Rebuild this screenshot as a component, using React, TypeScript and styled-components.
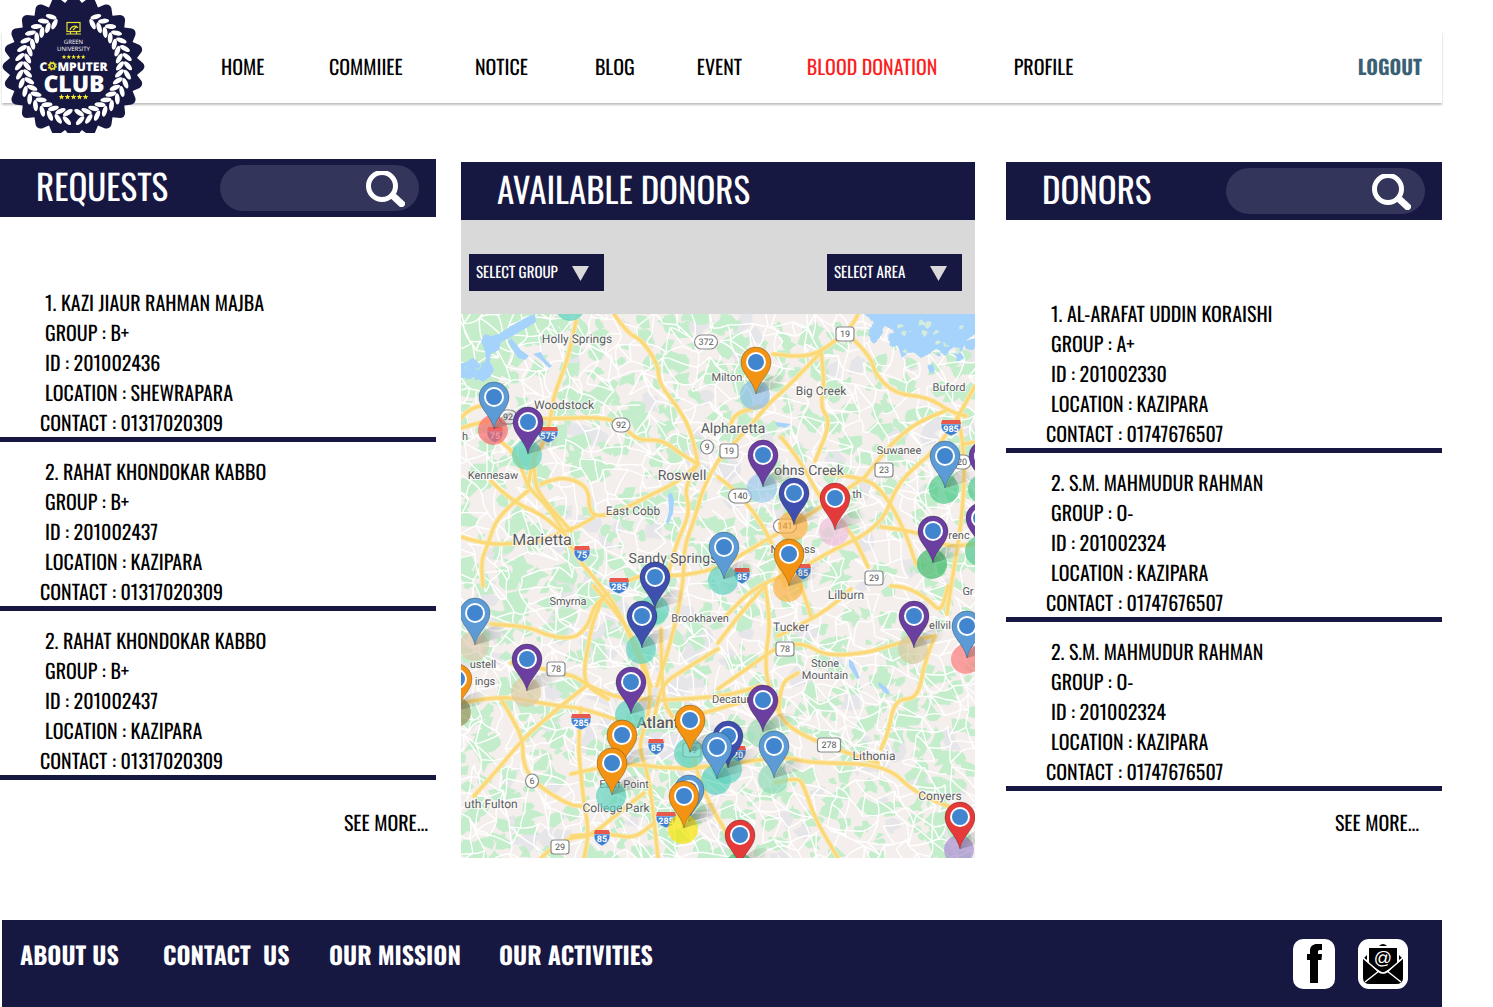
import React from "react";
import styled, { createGlobalStyle } from "styled-components";

const navy = "#171842";
const condensed = `Oswald, "Liberation Sans Narrow", "Roboto Condensed", "Open Sans Condensed", "DejaVu Sans Condensed", "Liberation Sans", sans-serif`;

const GlobalStyle = createGlobalStyle`
  *, *::before, *::after { box-sizing: border-box; }
  body {
    margin: 0;
    background: #fff;
    color: #000;
    font-family: ${condensed};
    text-rendering: geometricPrecision;
  }
  a { color: inherit; text-decoration: none; }
`;

const Page = styled.div`
  display: flex;
  flex-direction: column;
  min-height: 100vh;
  padding-right: 51px;
`;

/* ---------- top bar ---------- */

const Header = styled.header`
  position: relative;
  margin: 31px 0 0 2px;
  background: #fff;
  box-shadow: 0 2px 2px rgba(0, 0, 0, 0.25);
`;

const LogoLink = styled.a`
  position: absolute;
  left: 0;
  top: -31px;
  line-height: 0;
`;

const Nav = styled.nav`
  display: grid;
  grid-template-columns: 108fr 146fr 120fr 102fr 110fr 207fr 344fr auto;
  align-items: center;
  height: 72px;
  padding: 0 20px 2px 219px;
`;

const NavLink = styled.a<{ $tone?: string; $bold?: boolean }>`
  font-size: 20px;
  line-height: 30px;
  white-space: nowrap;
  color: ${(p) => p.$tone ?? "#000"};
  font-weight: ${(p) => (p.$bold ? 700 : 400)};
`;

/* ---------- main columns ---------- */

const Main = styled.main`
  display: grid;
  grid-template-columns: 436fr 514fr 442fr;
  gap: 25px;
  margin-top: 56px;
`;

const Column = styled.section<{ $top?: number; $inset?: number }>`
  display: flex;
  flex-direction: column;
  min-width: 0;
  padding-top: ${(p) => p.$top ?? 0}px;
  padding-left: ${(p) => p.$inset ?? 0}px;
`;

const PanelHead = styled.div`
  display: flex;
  align-items: center;
  justify-content: space-between;
  height: 58px;
  padding: 0 17px 0 36px;
  background: ${navy};
  color: #fff;
`;

const PanelTitle = styled.h2`
  margin: 0;
  padding-bottom: 4px;
  font-size: 35px;
  font-weight: 400;
  line-height: 54px;
  white-space: nowrap;
`;

const SearchBox = styled.form`
  display: flex;
  align-items: center;
  width: 199px;
  height: 46px;
  padding: 2px 14px 0 18px;
  border-radius: 23px;
  background: #34355b;
`;

const SearchInput = styled.input`
  flex: 1;
  min-width: 0;
  border: 0;
  outline: 0;
  background: transparent;
  color: #fff;
  font: 16px/24px ${condensed};
`;

const SearchButton = styled.button`
  padding: 0;
  border: 0;
  background: transparent;
  line-height: 0;
  cursor: pointer;
`;

const PersonList = styled.ul<{ $top: number }>`
  display: flex;
  flex-direction: column;
  gap: 14px;
  margin: 0;
  padding: ${(p) => p.$top}px 0 0;
  list-style: none;
`;

const Person = styled.li`
  padding-left: 40px;
  border-bottom: 5px solid ${navy};
  font-size: 20px;
  line-height: 30px;
`;

const Line = styled.div<{ $indent?: boolean }>`
  padding-left: ${(p) => (p.$indent ? 5 : 0)}px;
  white-space: nowrap;
`;

const SeeMore = styled.a<{ $right: number }>`
  align-self: flex-end;
  margin-top: auto;
  padding: 0 ${(p) => p.$right}px 21px 0;
  font-size: 20px;
  line-height: 30px;
`;

const Filters = styled.div`
  display: flex;
  justify-content: space-between;
  padding: 34px 13px 23px 8px;
  background: #d9d9d9;
`;

const SelectWrap = styled.div`
  position: relative;
  width: 135px;
  height: 37px;
`;

const Select = styled.select`
  width: 100%;
  height: 100%;
  padding: 0 40px 2px 7px;
  border: 0;
  border-radius: 0;
  appearance: none;
  background: ${navy};
  color: #fff;
  font: 15px/20px ${condensed};
  text-rendering: geometricPrecision;
`;

const Caret = styled.svg`
  position: absolute;
  right: 15px;
  top: 12px;
  pointer-events: none;
`;

const MapCanvas = styled.svg`
  display: block;
  width: 100%;
  height: auto;
  font-family: Roboto, "Liberation Sans", sans-serif;
`;

/* ---------- footer ---------- */

const Footer = styled.footer`
  display: flex;
  align-items: flex-start;
  justify-content: space-between;
  flex: 1;
  margin: 62px 0 0 2px;
  padding: 16px 34px 18px 18px;
  background: ${navy};
  color: #fff;
`;

const FooterLinks = styled.nav`
  display: grid;
  grid-template-columns: 143px 166px 170px auto;
`;

const FooterLink = styled.a`
  font-size: 24px;
  font-weight: 700;
  line-height: 36px;
  white-space: pre;
`;

const Socials = styled.div`
  display: flex;
  gap: 23px;
  padding-top: 3px;
`;

const SocialLink = styled.a`
  line-height: 0;
`;

/* ---------- logo ---------- */

const polar = (r: number, deg: number): [number, number] => {
  const a = (deg * Math.PI) / 180;
  return [73.5 + r * Math.cos(a), 66.5 + r * Math.sin(a)];
};

const fix = (p: [number, number]) => `${p[0].toFixed(1)} ${p[1].toFixed(1)}`;

function sealPath() {
  const n = 24;
  const step = 360 / n;
  let d = `M${fix(polar(64, -step / 2))}`;
  for (let i = 0; i < n; i++) {
    const a = i * step;
    d += `L${fix(polar(69.5, a - 3))}Q${fix(polar(72.5, a))} ${fix(polar(69.5, a + 3))}L${fix(polar(64, a + step / 2))}`;
  }
  return d + "Z";
}

const starPoints = (cx: number, cy: number, r: number) =>
  Array.from({ length: 10 }, (_, i) => {
    const a = -Math.PI / 2 + (i * Math.PI) / 5;
    const q = i % 2 ? r * 0.45 : r;
    return `${(cx + q * Math.cos(a)).toFixed(2)},${(cy + q * Math.sin(a)).toFixed(2)}`;
  }).join(" ");

function Logo() {
  const leaves: React.ReactNode[] = [];
  for (let side = 0; side < 2; side++) {
    const s = side ? 1 : -1;
    for (let i = 0; i < 17; i++) {
      const deg = 90 - s * (7 + i * 9.3);
      const along = deg - s * 90;
      [[46.5, s * 40], [54.5, -s * 40]].forEach(([r, tilt], k) => {
        const [x, y] = polar(r, deg);
        leaves.push(
          <ellipse key={`${side}-${i}-${k}`} cx={x} cy={y} rx={5.6} ry={2.4} transform={`rotate(${along + tilt} ${x} ${y})`} />,
        );
      });
    }
  }
  return (
    <svg width="144" height="133" viewBox="2 0 144 133" role="img" aria-label="Green University Computer Club">
      <path d={sealPath()} fill={navy} />
      <g fill="#fff">{leaves}</g>
      <g fill="none" stroke="#e6e034" strokeWidth="1.2">
        <rect x="67" y="22.500" width="13" height="9" />
        <path d="M70 30c1-4 6-5 8-2M73 30l4-4M66 34h15M70.500 32v2M76.500 32v2" />
      </g>
      <g fill="#fff" textAnchor="middle" fontFamily={`"Open Sans", "Noto Sans", sans-serif`}>
        <text x="73.500" y="44" fontSize="6">GREEN</text>
        <text x="73.500" y="51" fontSize="6">UNIVERSITY</text>
        <g fontWeight="800">
          <text x="43.500" y="71" fontSize="12">C</text>
          <text x="82.500" y="71" fontSize="12">MPUTER</text>
          <text x="74" y="92" fontSize="23">CLUB</text>
        </g>
      </g>
      <circle cx="52.300" cy="66" r="2.800" fill="none" stroke="#e6e034" strokeWidth="1.800" />
      <circle cx="52.300" cy="66" r="4" fill="none" stroke="#e6e034" strokeWidth="1.200" strokeDasharray="1.600 1.540" />
      <circle cx="52.300" cy="66" r="0.800" fill="#e6e034" />
      <g fill="#f3e92b">
        {[0, 1, 2, 3, 4].map((i) => (
          <React.Fragment key={i}>
            <polygon points={starPoints(64 + i * 4.8, 57, 2.4)} />
            <polygon points={starPoints(61.500 + i * 6, 97, 3)} />
          </React.Fragment>
        ))}
      </g>
    </svg>
  );
}

/* ---------- map ---------- */

function makeRandom(seed: number) {
  let s = seed;
  return () => {
    s = (s * 1664525 + 1013904223) % 4294967296;
    return s / 4294967296;
  };
}

type Pt = [number, number];

function smooth(pts: Pt[]) {
  let d = `M${pts[0][0]} ${pts[0][1]}`;
  for (let i = 1; i < pts.length - 1; i++) {
    const mx = (pts[i][0] + pts[i + 1][0]) / 2;
    const my = (pts[i][1] + pts[i + 1][1]) / 2;
    d += `Q${pts[i][0]} ${pts[i][1]} ${mx.toFixed(1)} ${my.toFixed(1)}`;
  }
  const last = pts[pts.length - 1];
  return d + `L${last[0]} ${last[1]}`;
}

function buildTerrain() {
  const rnd = makeRandom(41);
  const greens: string[] = [];
  const greys: string[] = [];
  const blob = (x: number, y: number, r: number) => {
    const n = 8;
    const pts = Array.from({ length: n }, (_, i) => {
      const a = (i / n) * Math.PI * 2;
      const q = r * (0.35 + rnd());
      return `${(x + q * 1.1 * Math.cos(a)).toFixed(1)} ${(y + q * Math.sin(a)).toFixed(1)}`;
    });
    return `M${pts.join("L")}Z`;
  };
  for (let i = 0; i < 1050; i++) greens.push(blob(rnd() * 514, rnd() * 544, 3 + rnd() * 8));
  for (let i = 0; i < 160; i++) greys.push(blob(rnd() * 514, rnd() * 544, 4 + rnd() * 9));
  for (let i = 0; i < 40; i++) greys.push(blob(90 + rnd() * 150, 270 + rnd() * 180, 6 + rnd() * 9));

  const cell = 14;
  const cols = 39;
  const rows = 41;
  const grid: Pt[][] = [];
  for (let r = 0; r < rows; r++) {
    grid.push([]);
    for (let c = 0; c < cols; c++) {
      grid[r].push([(c - 0.5) * cell + (rnd() - 0.5) * 15, (r - 0.5) * cell + (rnd() - 0.5) * 15]);
    }
  }
  const edge = (a: Pt, b: Pt) => {
    const mx = (a[0] + b[0]) / 2 + (rnd() - 0.5) * 7;
    const my = (a[1] + b[1]) / 2 + (rnd() - 0.5) * 7;
    return `M${a[0].toFixed(1)} ${a[1].toFixed(1)}Q${mx.toFixed(1)} ${my.toFixed(1)} ${b[0].toFixed(1)} ${b[1].toFixed(1)}`;
  };
  let streets = "";
  for (let r = 0; r < rows - 1; r++) {
    for (let c = 0; c < cols - 1; c++) {
      if (rnd() < 0.74) streets += edge(grid[r][c], grid[r][c + 1]);
      if (rnd() < 0.74) streets += edge(grid[r][c], grid[r + 1][c]);
      if (rnd() < 0.3) streets += edge(grid[r][c], grid[r + 1][c + 1]);
    }
  }
  const inlets: string[] = [];
  for (let i = 0; i < 46; i++) inlets.push(blob(408 + rnd() * 106, rnd() * rnd() * 62, 2 + rnd() * 6));
  for (let i = 0; i < 16; i++) inlets.push(blob(rnd() * 30, 50 + rnd() * 14, 2 + rnd() * 4));
  const islets: string[] = [];
  for (let i = 0; i < 14; i++) islets.push(blob(415 + rnd() * 90, 4 + rnd() * 36, 1 + rnd() * 3));
  return { greens: greens.join(""), greys: greys.join(""), streets, inlets: inlets.join(""), islets: islets.join("") };
}

const terrain = buildTerrain();

const highways: Pt[][] = [
  [[115, 7], [108, 43], [93, 80], [90, 103], [83, 130], [72, 143], [67, 173]],
  [[0, 114], [20, 108], [45, 104], [83, 105], [143, 103], [160, 110], [177, 127], [200, 125], [220, 140], [237, 150]],
  [[0, 104], [8, 94], [30, 90]],
  [[153, 0], [167, 20], [180, 25], [197, 50], [198, 70], [217, 93], [230, 117], [237, 150]],
  [[237, 150], [222, 172], [230, 197], [215, 230], [207, 262], [190, 300]],
  [[257, 147], [243, 170], [233, 207], [223, 233], [223, 262], [215, 310], [196, 372]],
  [[33, 123], [50, 133], [63, 160], [67, 173], [87, 193], [103, 217], [113, 240], [140, 272], [160, 300], [180, 350], [190, 372]],
  [[73, 140], [73, 167], [80, 183], [110, 217]],
  [[80, 170], [97, 163], [117, 167], [128, 177], [128, 197], [137, 203], [160, 197], [187, 182], [217, 168], [237, 150]],
  [[67, 177], [37, 200], [27, 230], [20, 247], [22, 272]],
  [[0, 223], [23, 230], [50, 230], [80, 227], [103, 217], [117, 213], [133, 203]],
  [[30, 167], [50, 187], [80, 200], [100, 217]],
  [[167, 267], [187, 258], [213, 263], [257, 255], [290, 235], [350, 200], [404, 163]],
  [[397, 0], [392, 13], [360, 38], [340, 43], [312, 40]],
  [[360, 38], [330, 70], [307, 90], [297, 103], [257, 147]],
  [[360, 38], [364, 67], [359, 93], [370, 108], [354, 147]],
  [[270, 110], [272, 100], [300, 92]],
  [[394, 27], [410, 43], [414, 60], [434, 80], [467, 83], [490, 98], [505, 102]],
  [[514, 72], [504, 90], [497, 103], [474, 137], [437, 167], [420, 213], [364, 240], [337, 257], [294, 272], [262, 305]],
  [[484, 97], [457, 107], [430, 130], [414, 150], [404, 163]],
  [[257, 163], [277, 177], [310, 223], [324, 272]],
  [[320, 123], [340, 147], [360, 187], [390, 217], [407, 253]],
  [[367, 160], [404, 163], [424, 180], [444, 217], [455, 250]],
  [[420, 213], [457, 217], [484, 233], [514, 230]],
  [[497, 103], [504, 133], [502, 200], [490, 272], [486, 300]],
  [[504, 130], [514, 128]],
  [[30, 310], [67, 312], [87, 322], [113, 325], [127, 312], [133, 292], [147, 279]],
  [[143, 282], [133, 302], [127, 332], [123, 355], [125, 372], [147, 385]],
  [[0, 389], [37, 382], [70, 387], [97, 392], [120, 394], [153, 405], [177, 412]],
  [[125, 372], [97, 394], [62, 425], [37, 455], [13, 482]],
  [[40, 385], [50, 402], [62, 425], [62, 452], [77, 472], [110, 492], [123, 492]],
  [[120, 394], [117, 429], [120, 462], [123, 489], [128, 519], [123, 544]],
  [[50, 349], [110, 359], [127, 372], [160, 385], [190, 385]],
  [[133, 272], [150, 292], [163, 309], [180, 339], [190, 372], [187, 405], [177, 432], [187, 459], [193, 505], [197, 544]],
  [[200, 315], [200, 385], [213, 405], [230, 432], [240, 472], [257, 505], [262, 512], [271, 532]],
  [[257, 335], [217, 359], [200, 372], [193, 405]],
  [[110, 522], [147, 519], [173, 525], [193, 509]],
  [[80, 544], [100, 525], [130, 522], [150, 505], [183, 479]],
  [[110, 460], [160, 448], [205, 455], [257, 452]],
  [[304, 272], [310, 305], [304, 345], [307, 372], [320, 405], [337, 419], [374, 435], [417, 449]],
  [[257, 329], [277, 302], [304, 272]],
  [[257, 375], [290, 352], [317, 332], [344, 329], [364, 342], [407, 339], [437, 329], [474, 322]],
  [[390, 275], [370, 295], [317, 322]],
  [[340, 272], [350, 302]],
  [[430, 272], [444, 272], [467, 285], [480, 299], [487, 272]],
  [[474, 322], [464, 345], [457, 385], [434, 385], [427, 419], [420, 435]],
  [[220, 455], [257, 452], [324, 442], [347, 449], [424, 450], [454, 479], [487, 492], [514, 505]],
  [[314, 469], [337, 462], [344, 475], [354, 505], [377, 544]],
  [[318, 400], [318, 370], [337, 359]],
  [[200, 386], [257, 384], [300, 372]],
  [[200, 410], [240, 400], [290, 385]],
];

const lakes = [
  "M0 54L18 56L25 46L24 37L20 27L24 20L30 22L38 20L50 12L66 3L74 0L75 8L62 16L48 24L40 28L38 36L30 40L28 52L30 62L22 68L14 63L0 64Z",
  "M50 24L60 36L68 42L64 46L57 44L47 28Z",
  "M72 40l8 -2l3 6l8 8l-3 2l-9 -9Z",
  "M410 0L514 0L514 20L506 26L500 38L492 32L484 42L476 34L468 40L460 44L450 36L441 44L436 30L432 16L424 12L418 16L412 8Z",
  "M207 180l4 -1l2 8l-1 12l-5 12l-2 -3l3 -11Z",
  "M388 345l4 3l7 16l-3 1l-8 -13Z",
  "M418 368l8 6l3 6l-4 0l-8 -9Z",
  "M314 108l16 2l-6 4l-8 -2Z",
];

/* Place names half hidden by a pin or the map edge carry only their visible part. */
const labels: [string, number, number, number, number?][] = [
  ["Holly Springs", 577, 343, 12], ["Milton", 727, 381, 11], ["Big Creek", 821, 395, 12], ["Woodstock", 564, 409, 12],
  ["Alpharetta", 733, 433, 14], ["Kennesaw", 493, 479, 11], ["Roswell", 682, 480, 14], ["ohns Creek", 809, 475, 14],
  ["Suwanee", 899, 454, 11], ["Buford", 949, 391, 11], ["East Cobb", 633, 515, 12], ["Marietta", 542, 545, 16],
  ["Sandy Springs", 673, 563, 14], ["Norcross", 793, 553, 11], ["renc", 959, 539, 11], ["Smyrna", 568, 605, 11],
  ["Brookhaven", 700, 622, 11], ["Lilburn", 846, 599, 12], ["Tucker", 791, 631, 12], ["Stone", 825, 667, 11],
  ["Mountain", 825, 679, 11], ["ustell", 483, 668, 11], ["ings", 485, 685, 11], ["Decatur", 731, 703, 11],
  ["Atlanta", 662, 728, 16, 500], ["Lithonia", 874, 760, 12], ["Conyers", 940, 800, 12], ["East Point", 624, 788, 11],
  ["College Park", 616, 812, 12], ["uth Fulton", 491, 808, 12], ["ellvil", 940, 629, 11], ["th", 857, 498, 11],
  ["Gr", 968, 595, 11], ["h", 465, 440, 11],
];

const routeSigns: [string, number, number, boolean][] = [
  ["372", 706, 342, true], ["92", 621, 425, true], ["92", 508, 417, true], ["9", 707, 447, true], ["140", 740, 496, true],
  ["20", 962, 462, true], ["6", 532, 781, true], ["19", 845, 334, false], ["19", 729, 451, false], ["23", 884, 470, false],
  ["29", 874, 578, false], ["78", 556, 669, false], ["78", 785, 649, false], ["278", 829, 745, false], ["29", 560, 847, false],
  ["19", 692, 750, false], ["141", 785, 526, true],
];

const interstates: [string, number, number][] = [
  ["575", 548, 435], ["75", 495, 435], ["75", 582, 554], ["985", 951, 428], ["85", 742, 576], ["85", 803, 572],
  ["285", 619, 586], ["285", 581, 722], ["85", 656, 747], ["20", 738, 754], ["285", 666, 820], ["85", 602, 838],
];

const blue = "#5c9bd5";
const purple = "#6b3fa0";
const indigo = "#3f4fae";
const orange = "#f39314";
const red = "#e53a3a";
const teal = "#5fd2bd";

const pins: [number, number, string, string?][] = [
  [494, 397, blue, "#fb6a6a"], [528, 422, purple, teal], [756, 362, orange, "#8fbfe8"], [763, 455, purple, "#a3cbf0"],
  [794, 493, indigo, "#fbb040"], [835, 498, red, "#f0c0dc"], [724, 547, blue, teal], [789, 554, orange, "#fbb040"],
  [984, 456, purple, "#4fc98a"], [945, 456, blue, "#4fc98a"], [981, 518, purple, "#4fc98a"], [933, 531, purple, "#3fb96a"],
  [655, 577, indigo, teal], [642, 616, indigo, teal], [914, 616, purple, "#d6caa0"], [967, 626, blue, "#fb7a7a"],
  [475, 613, blue, "#dccbb0"], [527, 659, purple, "#dccba4"], [457, 679, orange, "#97935a"], [631, 682, purple, teal],
  [690, 720, orange, teal], [763, 700, purple, "#a0dcb8"], [728, 736, indigo, teal], [717, 747, blue, teal],
  [774, 746, blue, "#8fdcb8"], [622, 735, orange], [612, 763, orange, teal], [689, 790, blue], [684, 796, orange, "#f7e600"],
  [740, 835, red, "#3fb96a"], [960, 817, red, "#a78fd0"],
];

function DonorMap() {
  return (
    <MapCanvas viewBox="0 0 514 544" role="img" aria-label="Map of available donors">
      <defs>
        <linearGradient id="pinShadow" x1="0" y1="0" x2="1" y2="0">
          <stop offset="0" stopColor="#333" stopOpacity="0.5" />
          <stop offset="1" stopColor="#333" stopOpacity="0" />
        </linearGradient>
      </defs>
      <rect width="514" height="544" fill="#f4efec" />
      <path d={terrain.greys} fill="#e6e5e9" />
      <path d={terrain.greens} fill="#c4edcb" />
      <path d="M0 0H92L80 14L52 34L44 56L32 76L12 84L0 82Z" fill="#c5edc9" />
      <path d={terrain.streets} fill="none" stroke="#fff" strokeWidth="1.400" />
      <g fill="#a6d3fb">
        {lakes.map((d) => <path key={d} d={d} />)}
        <path d={terrain.inlets} />
      </g>
      <path d={terrain.islets} fill="#d3ecdc" />
      <g fill="none" strokeLinecap="round" strokeLinejoin="round">
        {highways.map((pts, i) => <path key={i} d={smooth(pts)} stroke="#fbe7ac" strokeWidth="5" />)}
        {highways.map((pts, i) => <path key={i} d={smooth(pts)} stroke="#fbd878" strokeWidth="3" />)}
      </g>
      <g transform="translate(-461 -314)">
        <circle cx="570" cy="306" r="15" fill={teal} fillOpacity="0.75" />
        <g textAnchor="middle" fill="#5b5b60" stroke="#fff" strokeWidth="2" strokeOpacity="0.8" paintOrder="stroke">
          {labels.map(([name, x, y, size, weight]) => (
            <text key={name + x} x={x} y={y} fontSize={size} fontWeight={weight ?? 400}>{name}</text>
          ))}
        </g>
        {routeSigns.map(([n, x, y, oval]) => {
          const w = n.length * 5 + 8;
          return (
            <g key={`${n}-${x}`}>
              <rect x={x - w / 2} y={y - 7} width={w} height="14" rx={oval ? 7 : 3} fill="#fff" stroke="#8a8a8e" strokeWidth="1.200" />
              <text x={x} y={y + 3} fontSize="9" textAnchor="middle" fill="#555">{n}</text>
            </g>
          );
        })}
        {interstates.map(([n, x, y]) => {
          const w = n.length > 2 ? 10 : 8;
          return (
            <g key={`${n}-${x}`}>
              <path d={`M${x - w} ${y - 4}h${2 * w}q1 8 -${w} 12q-${w + 1} -4 -${w} -12Z`} fill="#3f7fd0" stroke="#fff" strokeWidth="0.600" />
              <path d={`M${x - w + 1} ${y - 8}h${2 * w - 2}l1 4h-${2 * w}Z`} fill="#e8584c" />
              <text x={x} y={y + 4} fontSize="9" fontWeight="700" textAnchor="middle" fill="#fff">{n}</text>
            </g>
          );
        })}
        {pins.map(([x, y, color, halo]) => (
          <g key={`${x}-${y}`} transform={`translate(${x} ${y})`}>
            {halo && <circle cx="-1" cy="33" r="15" fill={halo} fillOpacity="0.7" />}
            <path d="M0 32Q8 12 24 13Q38 17 24 25Z" fill="url(#pinShadow)" fillOpacity="0.6" />
            <path d="M0 32C-3 18 -15 12 -15 0A15 15 0 0 1 15 0C15 12 3 18 0 32Z" fill={color} stroke="#00000040" />
            <circle r="10" fill="#fff" />
            <circle r="8" fill="#4285cf" />
          </g>
        ))}
      </g>
    </MapCanvas>
  );
}

/* ---------- small icons ---------- */

const SearchIcon = () => (
  <svg width="40" height="36" viewBox="0 0 40 36" fill="none" stroke="#fff" aria-hidden="true">
    <circle cx="17" cy="15" r="13.500" strokeWidth="5" />
    <path d="M26 23L39 35" strokeWidth="7" />
  </svg>
);

const FacebookIcon = () => (
  <svg width="42" height="50" viewBox="0 0 42 50" aria-hidden="true">
    <rect width="42" height="50" rx="10" fill="#fff" />
    <path d="M17 44V21h-3v-6h3v-3c0-5 3-7 7-7h5v6h-2c-2 0-2 1-2 2v2h4l-.500 6H25v23Z" fill="#000" />
  </svg>
);

const MailIcon = () => (
  <svg width="50" height="50" viewBox="0 0 50 50" aria-hidden="true">
    <rect width="50" height="50" rx="11" fill="#fff" />
    <path d="M21 7q4-4 8 0Z" />
    <path d="M11 9h28v16L25 34L11 25Z" />
    <path d="M5 19V39q0 6 7 6h26q7 0 7-6V19L30 33q-5 3-10 0Z" />
    <path d="M9 16v5l-3-2ZM41 16v5l3-2Z" />
    <g fill="none" stroke="#fff" strokeWidth="1.500">
      <path d="M5 19l15 13q5 4 10 0l15-13M7 43l14-11M43 43l-14-11" />
    </g>
    <text x="25" y="25" fontSize="18" textAnchor="middle" fill="#fff" fontFamily={`"Liberation Sans", sans-serif`}>@</text>
  </svg>
);

/* ---------- content ---------- */

const menu: { text: string; tone?: string }[] = [
  { text: "HOME" }, { text: "COMMIIEE" }, { text: "NOTICE" }, { text: "BLOG" }, { text: "EVENT" },
  { text: "BLOOD DONATION", tone: "#fb1e1e" }, { text: "PROFILE" },
];

type PersonData = { name: string; group: string; id: string; location: string; contact: string };

const kabbo = { name: "2. RAHAT KHONDOKAR KABBO", group: "B+", id: "201002437", location: "KAZIPARA", contact: "01317020309" };
const mahmudur = { name: "2. S.M. MAHMUDUR RAHMAN", group: "O-", id: "201002324", location: "KAZIPARA", contact: "01747676507" };

const requests: PersonData[] = [
  { name: "1. KAZI JIAUR RAHMAN MAJBA", group: "B+", id: "201002436", location: "SHEWRAPARA", contact: "01317020309" },
  kabbo,
  kabbo,
];

const donors: PersonData[] = [
  { name: "1. AL-ARAFAT UDDIN KORAISHI", group: "A+", id: "201002330", location: "KAZIPARA", contact: "01747676507" },
  mahmudur,
  mahmudur,
];

function SearchPanelHead({ title }: { title: string }) {
  return (
    <PanelHead>
      <PanelTitle>{title}</PanelTitle>
      <SearchBox role="search" onSubmit={(e) => e.preventDefault()}>
        <SearchInput type="text" aria-label={`Search ${title.toLowerCase()}`} />
        <SearchButton type="submit" aria-label="Search"><SearchIcon /></SearchButton>
      </SearchBox>
    </PanelHead>
  );
}

function People({ people, top }: { people: PersonData[]; top: number }) {
  return (
    <PersonList $top={top}>
      {people.map((p, i) => (
        <Person key={i}>
          <Line $indent>{p.name}</Line>
          <Line $indent>GROUP : {p.group}</Line>
          <Line $indent>ID : {p.id}</Line>
          <Line $indent>LOCATION : {p.location}</Line>
          <Line>CONTACT : {p.contact}</Line>
        </Person>
      ))}
    </PersonList>
  );
}

function Dropdown({ label, options }: { label: string; options: string[] }) {
  return (
    <SelectWrap>
      <Select aria-label={label} defaultValue="">
        <option value="">{label}</option>
        {options.map((o) => <option key={o}>{o}</option>)}
      </Select>
      <Caret width="17" height="15" viewBox="0 0 17 15" aria-hidden="true">
        <path d="M0 0H17L8.500 15Z" fill="#d9d9d9" />
      </Caret>
    </SelectWrap>
  );
}

export default function App() {
  return (
    <Page>
      <GlobalStyle />
      <Header>
        <Nav>
          {menu.map((m) => <NavLink key={m.text} href="#" $tone={m.tone}>{m.text}</NavLink>)}
          <NavLink href="#" $tone="#3a6173" $bold>LOGOUT</NavLink>
        </Nav>
        <LogoLink href="#"><Logo /></LogoLink>
      </Header>

      <Main>
        <Column>
          <SearchPanelHead title="REQUESTS" />
          <People people={requests} top={70} />
          <SeeMore href="#" $right={8}>SEE MORE...</SeeMore>
        </Column>
        <Column $top={3}>
          <PanelHead><PanelTitle>AVAILABLE DONORS</PanelTitle></PanelHead>
          <Filters>
            <Dropdown label="SELECT GROUP" options={["A+", "B+", "O-"]} />
            <Dropdown label="SELECT AREA" options={["KAZIPARA", "SHEWRAPARA"]} />
          </Filters>
          <DonorMap />
        </Column>
        <Column $top={3} $inset={6}>
          <SearchPanelHead title="DONORS" />
          <People people={donors} top={78} />
          <SeeMore href="#" $right={23}>SEE MORE...</SeeMore>
        </Column>
      </Main>

      <Footer>
        <FooterLinks>
          {["ABOUT US", "CONTACT  US", "OUR MISSION", "OUR ACTIVITIES"].map((t) => (
            <FooterLink key={t} href="#">{t}</FooterLink>
          ))}
        </FooterLinks>
        <Socials>
          <SocialLink href="#" aria-label="Facebook"><FacebookIcon /></SocialLink>
          <SocialLink href="#" aria-label="Email"><MailIcon /></SocialLink>
        </Socials>
      </Footer>
    </Page>
  );
}
